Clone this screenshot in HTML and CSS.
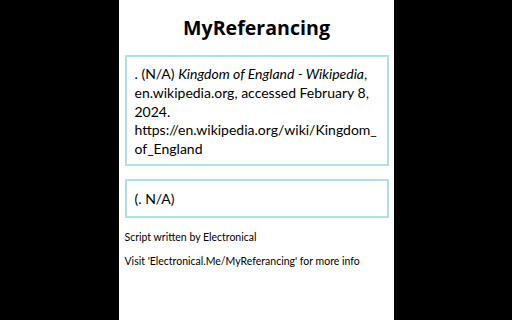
FILE: index.html
```html
<!DOCTYPE html>
<html>
<head>
<meta charset="utf-8">
<link rel="stylesheet" href="styles.css">
</head>
<body>
<div class="page">
  <h1 class="title">MyReferancing</h1>
  <div class="box box-ref">. (N/A) <i>Kingdom of England - Wikipedia</i>, en.wikipedia.org, accessed February 8, 2024. https://en.wikipedia.org/wiki/Kingdom_of_England</div>
  <div class="box box-cite">(. N/A)</div>
  <p class="note">Script written by Electronical</p>
  <p class="note">Visit 'Electronical.Me/MyReferancing' for more info</p>
</div>
</body>
</html>
```

FILE: styles.css
```css
html, body {
  margin: 0;
  height: 100%;
}
body {
  background: #000;
  display: flex;
  justify-content: center;
  font-family: "Lato", "Open Sans", sans-serif;
  color: #000;
}
.page {
  width: 264px;
  background: #fff;
  padding: 0 5px 0 6px;
  height: 100%;
}
.title {
  margin: 13px 0 12px;
  font-family: "Open Sans", sans-serif;
  font-size: 19.6px;
  font-weight: 700;
  line-height: 30px;
  text-align: center;
}
.box {
  border: 2px solid #b0e0e6;
  padding: 8px 7px 5px 8px;
  font-size: 14px;
  line-height: 18.8px;
  overflow-wrap: anywhere;
}
.box-cite {
  margin-top: 13px;
  padding-top: 9px;
  padding-bottom: 7px;
}
.note {
  margin: 12px 0 0;
  font-size: 10.5px;
  line-height: 15px;
}
.note + .note {
  margin-top: 9px;
}
```
